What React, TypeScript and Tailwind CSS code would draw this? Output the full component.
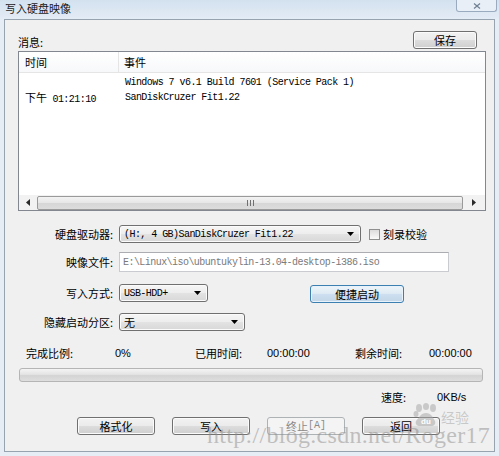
import React from "react";
import clsx from "clsx";

const mono = "font-['Liberation_Mono','Noto_Sans_CJK_SC',monospace] text-[10px] tracking-[-0.55px]";
const num = "font-['Liberation_Sans','Noto_Sans_CJK_SC',sans-serif] text-[11px]";

function Btn({
  children,
  className,
  disabled,
  primary,
}: {
  children: React.ReactNode;
  className?: string;
  disabled?: boolean;
  primary?: boolean;
}) {
  return (
    <div
      className={clsx(
        "flex h-[18px] items-center justify-center rounded-[3px] border text-[11px] leading-none",
        disabled
          ? "border-[#adb2b5] bg-[#f4f4f4] text-[#8a8a8a]"
          : primary
            ? "border-[#3c7fb1] bg-[linear-gradient(#eef5fa,#dde9f2_50%,#cddff0_50%,#c2d6e8)] shadow-[inset_0_0_0_1px_#e8f2fa]"
            : "border-[#707070] bg-[linear-gradient(#f2f2f2,#ebebeb_50%,#dddddd_50%,#cfcfcf)] shadow-[inset_0_0_0_1px_#fbfbfb]",
        className
      )}
    >
      {children}
    </div>
  );
}

function DownArrow() {
  return (
    <svg width="7" height="4" viewBox="0 0 7 4" className="shrink-0">
      <path d="M0 0h7L3.5 4z" fill="#000" />
    </svg>
  );
}

function Combo({ value, className, textClass }: { value: string; className: string; textClass?: string }) {
  return (
    <div
      className={clsx(
        "flex h-[18px] items-center justify-between rounded-[3px] border border-[#707070] bg-[linear-gradient(#f6f6f6,#ededed_50%,#e3e3e3_50%,#d8d8d8)] pl-[4px] pr-[6px] shadow-[inset_0_0_0_1px_#fbfbfb]",
        className
      )}
    >
      <span className={textClass ?? mono}>{value}</span>
      <DownArrow />
    </div>
  );
}

function Label({ children }: { children: React.ReactNode }) {
  return <div className="w-[108px] shrink-0 pr-[0px] text-right text-[11px] leading-[14px]">{children}</div>;
}

export default function App() {
  return (
    <div className="relative flex h-[456px] w-[499px] flex-col overflow-hidden bg-[#e6edf5] font-['Noto_Sans_CJK_SC',sans-serif] text-black">
      {/* title bar */}
      <div className="flex h-[19px] shrink-0 items-start bg-[linear-gradient(#d3e1ef,#e4ecf5)]">
        <div className="pl-[5px] pt-[1px] text-[11px] leading-[15px] text-[#1a1a1a]">写入硬盘映像</div>
        <div className="ml-auto mr-[2px] flex h-[12px] w-[41px] items-center justify-center rounded-b-[3px] border border-t-0 border-[#9aabbf] bg-[#e8eff7]">
          <svg width="8" height="6" viewBox="0 0 8 6">
            <path d="M1 0.5l6 5M7 0.5l-6 5" stroke="#6f7f92" strokeWidth="1.2" />
          </svg>
        </div>
      </div>

      {/* client area */}
      <div className="mx-[4px] flex h-[433px] w-[491px] shrink-0 flex-col border border-[#97a3ae] bg-[#f0f0f0]">
        <div className="flex items-end pl-[13px] pr-[17px] pt-[11px]">
          <span className="text-[11px] leading-[14px]">消息:</span>
          <Btn className="ml-auto h-[17px] w-[64px]">保存</Btn>
        </div>

        {/* message list */}
        <div className="ml-[13px] mt-[2px] flex h-[160px] w-[468px] flex-col border border-[#828790] bg-white">
          <div className="flex h-[21px] shrink-0 items-center border-b border-[#e5e5e5] bg-[linear-gradient(#ffffff,#f7f8fa)] text-[11px]">
            <div className="flex h-full w-[100px] items-center border-r border-[#e5e5e5] pl-[6px]">时间</div>
            <div className="pl-[5px]">事件</div>
          </div>
          <div className="pt-[2px]">
            <div className="flex h-[15px] items-center">
              <div className="w-[100px]" />
              <div className={clsx(mono, "pl-[6px]")}>Windows 7 v6.1 Build 7601 (Service Pack 1)</div>
            </div>
            <div className="flex h-[15px] items-center">
              <div className={clsx(mono, "w-[100px] pl-[6px]")}>
                <span className="font-['Noto_Sans_CJK_SC',sans-serif] text-[11px] tracking-normal">下午</span> 01:21:10
              </div>
              <div className={clsx(mono, "pl-[6px]")}>SanDiskCruzer Fit1.22</div>
            </div>
          </div>
          <div className="flex-1" />
          {/* horizontal scrollbar */}
          <div className="flex h-[15px] shrink-0 items-center bg-[#f2f2f2]">
            <div className="flex h-full w-[17px] items-center justify-center">
              <svg width="4" height="7" viewBox="0 0 4 7">
                <path d="M4 0v7L0 3.5z" fill="#2a2a2a" />
              </svg>
            </div>
            <div className="ml-[1px] flex h-[14px] w-[426px] items-center justify-center rounded-[2px] border border-[#9a9a9a] bg-[linear-gradient(#f3f3f3,#e6e6e6_50%,#d6d6d6_50%,#dcdcdc)]">
              <div className="flex gap-[2px]">
                <div className="h-[6px] w-[1px] bg-[#707070]" />
                <div className="h-[6px] w-[1px] bg-[#707070]" />
                <div className="h-[6px] w-[1px] bg-[#707070]" />
              </div>
            </div>
            <div className="flex h-full flex-1 items-center justify-center">
              <svg width="4" height="7" viewBox="0 0 4 7">
                <path d="M0 0v7L4 3.5z" fill="#2a2a2a" />
              </svg>
            </div>
          </div>
        </div>

        {/* form */}
        <div className="mt-[14px] flex h-[18px] items-center">
          <Label>硬盘驱动器:</Label>
          <Combo className="ml-[6px] w-[242px]" value="(H:, 4 GB)SanDiskCruzer Fit1.22" />
          <div className="ml-[8px] h-[11px] w-[11px] border border-[#8e8f8f] bg-[linear-gradient(#dcdcdc,#fafafa)]" />
          <span className="ml-[3px] text-[11px] leading-[14px]">刻录校验</span>
        </div>

        <div className="mt-[9px] flex h-[20px] items-center">
          <Label>映像文件:</Label>
          <div className="ml-[6px] flex h-[20px] w-[330px] items-center border border-[#c9cbd1] border-t-[#abadb3] bg-white pl-[3px]">
            <span className={clsx(mono, "text-[#7a7a7a]")}>E:\Linux\iso\ubuntukylin-13.04-desktop-i386.iso</span>
          </div>
        </div>

        <div className="mt-[12px] flex h-[19px] items-start">
          <div className="flex h-[18px] items-center">
            <Label>写入方式:</Label>
          </div>
          <Combo className="ml-[6px] w-[89px]" value="USB-HDD+" />
          <Btn primary className="ml-[102px] mt-[1px] w-[94px]">
            便捷启动
          </Btn>
        </div>

        <div className="mt-[10px] flex h-[18px] items-center">
          <Label>隐藏启动分区:</Label>
          <Combo
            className="ml-[6px] w-[126px]"
            value="无"
            textClass="text-[11px] leading-none"
          />
        </div>

        {/* progress */}
        <div className="mt-[15px] flex h-[14px] items-center pl-[21px] text-[11px] leading-[14px]">
          <span className="w-[89px]">完成比例:</span>
          <span className={clsx(num, "w-[80px]")}>0%</span>
          <span className="w-[72px]">已用时间:</span>
          <span className={clsx(num, "w-[88px]")}>00:00:00</span>
          <span className="w-[74px]">剩余时间:</span>
          <span className={num}>00:00:00</span>
        </div>

        <div className="ml-[14px] mt-[8px] h-[14px] w-[464px] rounded-[3px] border border-[#b5b5b5] bg-[linear-gradient(#f4f4f4,#e4e4e4_45%,#d4d4d4_55%,#dedede)]" />

        <div className="mt-[8px] flex h-[14px] items-center pl-[376px] text-[11px] leading-[14px]">
          <span className="w-[56px]">速度:</span>
          <span className={num}>0KB/s</span>
        </div>

        <div className="mt-[13px] flex gap-[17px] pl-[72px]">
          <Btn className="w-[78px]">格式化</Btn>
          <Btn className="w-[78px]">写入</Btn>
          <Btn disabled className="w-[78px]">
            终止<span className="font-['Liberation_Mono',monospace] text-[10px]">[A]</span>
          </Btn>
          <Btn className="w-[78px]">返回</Btn>
        </div>
      </div>

      {/* watermark overlay */}
      <div className="pointer-events-none absolute left-[412px] top-[403px] flex items-end gap-[1px]">
        <svg width="28" height="24" viewBox="0 0 28 24">
          <g fill="rgba(170,170,170,0.55)">
            <ellipse cx="7" cy="5" rx="3" ry="4" />
            <ellipse cx="14" cy="3.5" rx="3" ry="3.5" />
            <ellipse cx="21" cy="5" rx="3" ry="4" />
            <ellipse cx="4" cy="11" rx="2.5" ry="3" />
            <path d="M8 13c3-4 9-4 12 0l3 5c1 3-1 5-4 5H8c-3 0-5-2-4-5z" />
          </g>
          <text x="9" y="21" fontSize="8" fill="#fff" fontFamily="Liberation Sans" fontWeight="bold">
            du
          </text>
        </svg>
        <span className="mb-[1px] text-[14px] leading-[18px] text-[rgba(150,150,150,0.45)]">经验</span>
      </div>
      <div className="pointer-events-none absolute left-[207px] top-[423px] font-['Liberation_Serif',serif] text-[24px] leading-none tracking-[0.3px] text-[rgba(140,140,140,0.5)]">
        http://blog.csdn.net/Roger17
      </div>
    </div>
  );
}
